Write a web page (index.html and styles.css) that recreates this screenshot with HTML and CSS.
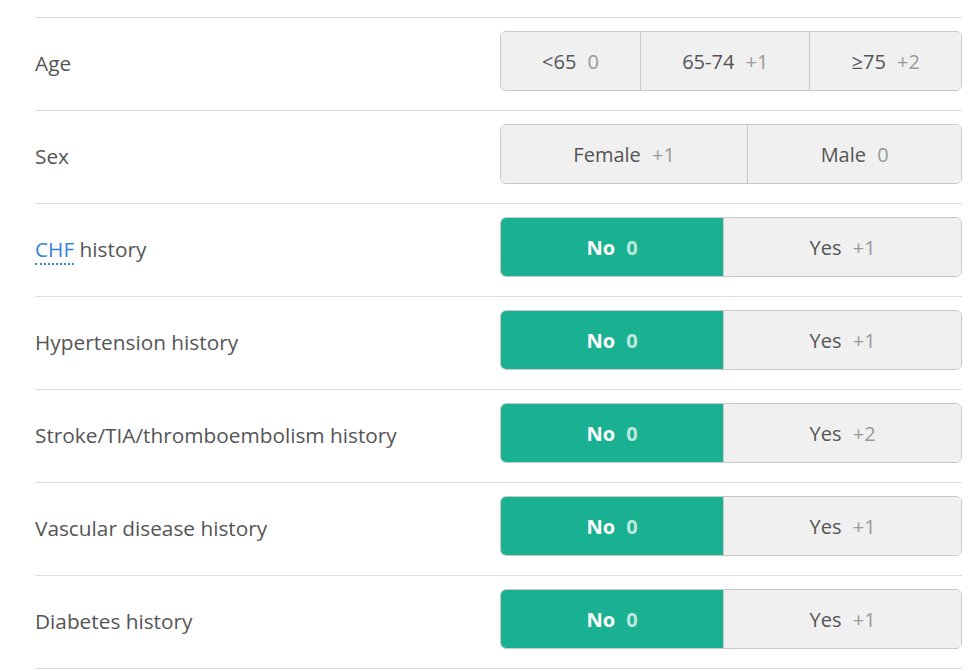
FILE: index.html
```html
<!DOCTYPE html>
<html lang="en">
<head>
  <meta charset="UTF-8" />
  <meta name="viewport" content="width=device-width, initial-scale=1.0"/>
  <title>CHA2DS2-VASc Score</title>
  <link rel="stylesheet" href="styles.css">
</head>
<body>

<!-- Score inputs -->
<div class="calc">

  <div class="row">
    <div class="label">Age</div>
    <div class="toggle">
      <button class="opt">&lt;65 <span class="pts">0</span></button>
      <button class="opt">65-74 <span class="pts">+1</span></button>
      <button class="opt">&ge;75 <span class="pts">+2</span></button>
    </div>
  </div>

  <div class="row">
    <div class="label">Sex</div>
    <div class="toggle">
      <button class="opt">Female <span class="pts">+1</span></button>
      <button class="opt">Male <span class="pts">0</span></button>
    </div>
  </div>

  <div class="row">
    <div class="label"><abbr title="Congestive heart failure">CHF</abbr> history</div>
    <div class="toggle">
      <button class="opt selected">No <span class="pts">0</span></button>
      <button class="opt">Yes <span class="pts">+1</span></button>
    </div>
  </div>

  <div class="row">
    <div class="label">Hypertension history</div>
    <div class="toggle">
      <button class="opt selected">No <span class="pts">0</span></button>
      <button class="opt">Yes <span class="pts">+1</span></button>
    </div>
  </div>

  <div class="row">
    <div class="label">Stroke/TIA/thromboembolism history</div>
    <div class="toggle">
      <button class="opt selected">No <span class="pts">0</span></button>
      <button class="opt">Yes <span class="pts">+2</span></button>
    </div>
  </div>

  <div class="row">
    <div class="label">Vascular disease history</div>
    <div class="toggle">
      <button class="opt selected">No <span class="pts">0</span></button>
      <button class="opt">Yes <span class="pts">+1</span></button>
    </div>
  </div>

  <div class="row">
    <div class="label">Diabetes history</div>
    <div class="toggle">
      <button class="opt selected">No <span class="pts">0</span></button>
      <button class="opt">Yes <span class="pts">+1</span></button>
    </div>
  </div>

</div>

</body>
</html>
```

FILE: styles.css
```css
body {
  font-family: "Open Sans", Arial, sans-serif;
  background: white;
  margin: 0;
  padding: 0;
  color: #555;
}
.calc {
  width: 927px;
  margin: 17px 0 0 35px;
  border-bottom: 1px solid #ddd;
}
.row {
  display: flex;
  align-items: center;
  justify-content: space-between;
  border-top: 1px solid #ddd;
  padding: 13px 0 19px;
}
.label {
  font-size: 20.8px;
  padding-top: 3px;
}
abbr {
  color: #3a84d8;
  text-decoration: none;
  border-bottom: 2px dotted #3a84d8;
}
.toggle {
  display: flex;
  width: 462px;
  height: 60px;
  border: 1px solid #c8c8c8;
  border-radius: 6px;
  overflow: hidden;
  box-sizing: border-box;
}
.opt {
  flex: 1 1 auto;
  font-family: inherit;
  font-size: 20px;
  color: #555;
  background: #f0f0f0;
  border: none;
  border-left: 1px solid #c8c8c8;
  padding: 0 10px;
  cursor: pointer;
}
.opt:first-child {
  border-left: none;
}
.pts {
  color: #999;
  margin-left: 6px;
}
.opt.selected {
  background: #1ab192;
  color: white;
  font-weight: bold;
}
.opt.selected .pts {
  color: #bde8dd;
}
```
